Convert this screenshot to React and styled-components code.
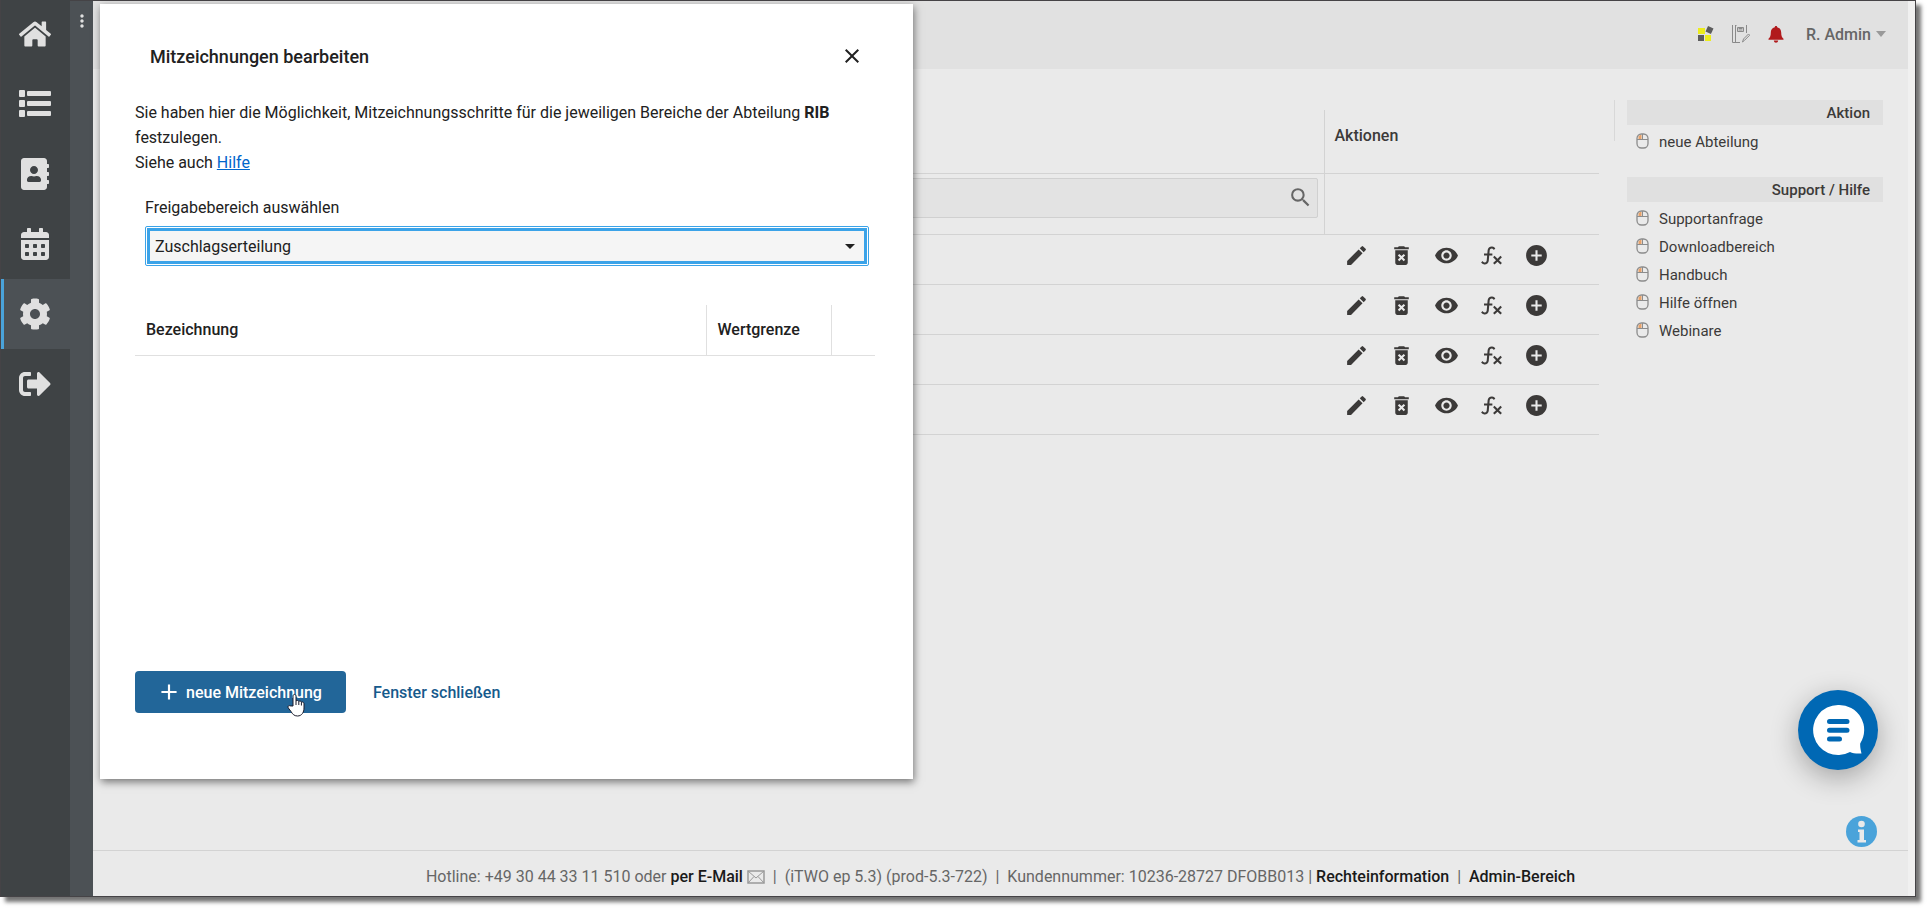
import React, { useState } from 'react';
import styled, { createGlobalStyle } from 'styled-components';
import { FaHome, FaAddressBook, FaCalendarAlt, FaCog, FaSignOutAlt } from 'react-icons/fa';
import {
  MdEdit,
  MdDeleteForever,
  MdVisibility,
  MdAddCircle,
  MdSearch,
  MdClose,
  MdAdd,
  MdMoreVert,
} from 'react-icons/md';

const GlobalStyle = createGlobalStyle`
  * {
    box-sizing: border-box;
  }
  body {
    margin: 0;
    background: #fff;
    font-family: Roboto, 'Liberation Sans', sans-serif;
    font-size: 16px;
    color: #212121;
  }
  button, select, input {
    font: inherit;
    color: inherit;
  }
`;

const Page = styled.div`
  display: flex;
  height: 100vh;
  padding: 0 15px 15px 0;
`;

const Window = styled.div`
  position: relative;
  display: flex;
  flex: 1;
  border: 1px solid #454346;
  background: #eaeaea;
  box-shadow: 5px 5px 4px 0 rgba(0, 0, 0, 0.55);
`;

const Sidebar = styled.nav`
  display: flex;
  flex-direction: column;
  width: 69px;
  margin-top: -2px;
  background: #3f4345;
`;

const SidebarLink = styled.a`
  display: flex;
  align-items: center;
  justify-content: center;
  height: 70px;
  padding-right: ${({ $active }) => ($active ? '4px' : '1px')};
  border-left: ${({ $active }) => ($active ? '3px solid #4aa3da' : '0')};
  background: ${({ $active }) => ($active ? '#4c5155' : 'transparent')};
  color: #e0e0e0;
  font-size: 32px;
`;

const Strip = styled.div`
  display: flex;
  justify-content: center;
  align-items: flex-start;
  width: 23px;
  padding-top: 10px;
  background: #4c5155;
`;

const StripButton = styled.button`
  display: flex;
  padding: 0;
  border: 0;
  background: none;
  color: #e0e0e0;
  font-size: 20px;
`;

const Main = styled.div`
  display: flex;
  flex-direction: column;
  flex: 1;
  min-width: 0;
`;

const Header = styled.header`
  display: flex;
  align-items: center;
  justify-content: flex-end;
  gap: 18px;
  height: 68px;
  padding: 0 22px 2px 0;
  background: #e1e1e1;
`;

const HeaderButton = styled.button`
  display: flex;
  padding: 0;
  border: 0;
  background: none;
`;

const UserButton = styled(HeaderButton)`
  align-items: center;
  margin-left: 4px;
  color: #666;
  font-weight: 500;
  svg {
    margin-left: 5px;
  }
`;

const Content = styled.main`
  display: flex;
  flex: 1;
  padding: 31px 25px 0 32px;
`;

const TableArea = styled.div`
  flex: 1;
  padding: 10px 15px 0 0;
`;

const DepartmentTable = styled.table`
  width: 100%;
  border-collapse: collapse;
  table-layout: fixed;
  color: #3c3a39;
`;

const HeadCell = styled.th`
  height: 63px;
  padding: 0 10px 11px;
  border-bottom: 1px solid #d3d3d3;
  border-left: ${({ $line }) => ($line ? '1px solid #d3d3d3' : '0')};
  font-weight: 500;
  text-align: left;
`;

const FilterCell = styled.td`
  height: 61px;
  padding: 4px 6px 0 0;
  border-bottom: 1px solid #d3d3d3;
  border-left: ${({ $line }) => ($line ? '1px solid #d3d3d3' : '0')};
  vertical-align: top;
`;

const SearchBox = styled.label`
  display: flex;
  align-items: center;
  height: 40px;
  padding-right: 4px;
  border: 1px solid #d0d0d0;
  border-radius: 2px;
  background: #e3e3e3;
  color: #666;
  font-size: 25px;
`;

const SearchInput = styled.input`
  flex: 1;
  min-width: 0;
  border: 0;
  outline: 0;
  background: none;
  font-size: 16px;
`;

const BodyCell = styled.td`
  height: 50px;
  padding: 0 0 8px 20px;
  border-bottom: 1px solid #d3d3d3;
`;

const Actions = styled.div`
  display: flex;
  gap: 20px;
`;

const ActionButton = styled.button`
  display: flex;
  padding: 0;
  border: 0;
  background: none;
  font-size: 25px;
`;

const Aside = styled.aside`
  display: flex;
  align-items: flex-start;
  width: 269px;
`;

const AsideLine = styled.div`
  width: 1px;
  height: 41px;
  margin-right: 12px;
  background: #d8d8d8;
`;

const AsideGroups = styled.div`
  display: flex;
  flex: 1;
  flex-direction: column;
  gap: 21px;
`;

const GroupTitle = styled.h2`
  height: 25px;
  margin: 0 0 3px;
  padding-right: 13px;
  background: #e0e0e0;
  color: #3c3a39;
  font-size: 15px;
  font-weight: 500;
  line-height: 26px;
  text-align: right;
`;

const GroupLink = styled.a`
  display: flex;
  height: 28px;
  padding-left: 9px;
  color: #3c3a39;
  font-size: 15px;
  line-height: 28px;
  text-decoration: none;
  svg {
    margin: 5px 10px 0 0;
  }
`;

const Footer = styled.footer`
  display: flex;
  align-items: center;
  justify-content: center;
  height: 46px;
  padding-top: 6px;
  border-top: 1px solid #d3d3d3;
  color: #666;
  white-space: pre;
`;

const FooterLink = styled.a`
  color: #1a1a1a;
  font-weight: 500;
  text-decoration: none;
`;

const MailIcon = styled.svg`
  margin-left: 4px;
`;

const ScrollTrack = styled.div`
  width: 7px;
  background: #f0f0f0;
`;

const Dialog = styled.section`
  position: absolute;
  top: 3px;
  left: 99px;
  display: flex;
  flex-direction: column;
  width: 813px;
  height: 775px;
  padding: 34px 38px 66px 35px;
  background: #fff;
  box-shadow: 1px 3px 8px rgba(0, 0, 0, 0.5);
`;

const DialogHeader = styled.div`
  display: flex;
  align-items: center;
  justify-content: space-between;
  height: 36px;
  padding: 0 11px 0 15px;
`;

const DialogTitle = styled.h1`
  margin: 0;
  font-size: 18px;
  font-weight: 500;
`;

const CloseButton = styled.button`
  display: flex;
  padding: 0;
  border: 0;
  background: none;
  font-size: 24px;
`;

const Intro = styled.p`
  margin: 26px 0 20px;
  line-height: 25px;
`;

const HelpLink = styled.a`
  color: #0066cc;
`;

const Field = styled.div`
  display: flex;
  flex-direction: column;
  margin: 0 6px 0 10px;
`;

const FieldLabel = styled.label`
  margin-bottom: 6px;
  line-height: 25px;
`;

const SelectWrap = styled.div`
  display: grid;
  align-items: center;
  border: 1px solid #3ba3e8;
  border-radius: 2px;
  padding: 1px;
  > * {
    grid-area: 1 / 1;
  }
  svg {
    justify-self: end;
    margin-right: 12px;
    pointer-events: none;
  }
`;

const Select = styled.select`
  width: 100%;
  height: 36px;
  padding: 0 5px;
  border: 3px solid #3ba3e8;
  outline: 0;
  appearance: none;
  background: #f5f5f5;
`;

const SignTable = styled.table`
  margin-top: 39px;
  border-collapse: collapse;
  table-layout: fixed;
`;

const SignHead = styled.th`
  width: ${({ $width }) => $width || 'auto'};
  height: 50px;
  padding: 0 11px;
  border-bottom: 1px solid #e0e0e0;
  border-left: ${({ $line }) => ($line ? '1px solid #e0e0e0' : '0')};
  font-weight: 500;
  text-align: left;
`;

const DialogFooter = styled.div`
  display: flex;
  align-items: center;
  gap: 27px;
  margin-top: auto;
`;

const PrimaryButton = styled.button`
  position: relative;
  display: flex;
  align-items: center;
  gap: 4px;
  height: 42px;
  padding: 0 24px 0 21px;
  border: 0;
  border-radius: 4px;
  background: #226699;
  color: #fff;
  font-weight: 500;
`;

const TextButton = styled.button`
  padding: 0;
  border: 0;
  background: none;
  color: #165a8c;
  font-weight: 500;
`;

const Cursor = styled.svg`
  position: absolute;
  top: 22px;
  left: 152px;
`;

const ChatButton = styled.button`
  position: absolute;
  right: 37px;
  bottom: 126px;
  display: flex;
  padding: 0;
  border: 0;
  border-radius: 50%;
  background: #0068b4;
  box-shadow: 0 8px 28px rgba(0, 0, 0, 0.3);
`;

const InfoButton = styled.button`
  position: absolute;
  right: 38px;
  bottom: 49px;
  display: flex;
  padding: 0;
  border: 0;
  background: none;
`;

function ListIcon() {
  return (
    <svg width="32" height="28" viewBox="0 0 32 28" fill="currentColor">
      <rect y="0" width="6" height="7" rx="1" />
      <rect y="10" width="6" height="7" rx="1" />
      <rect y="20" width="6" height="7" rx="1" />
      <rect x="8" y="1" width="24" height="5" rx="1" />
      <rect x="8" y="11" width="24" height="5" rx="1" />
      <rect x="8" y="21" width="24" height="5" rx="1" />
    </svg>
  );
}

const sidebarItems = [
  { label: 'Startseite', Icon: FaHome },
  { label: 'Liste', Icon: ListIcon },
  { label: 'Adressbuch', Icon: FaAddressBook },
  { label: 'Kalender', Icon: FaCalendarAlt },
  { label: 'Einstellungen', Icon: FaCog, active: true },
  { label: 'Abmelden', Icon: FaSignOutAlt },
];

const asideGroups = [
  { title: 'Aktion', links: ['neue Abteilung'] },
  {
    title: 'Support / Hilfe',
    links: ['Supportanfrage', 'Downloadbereich', 'Handbuch', 'Hilfe öffnen', 'Webinare'],
  },
];

const rows = [1, 2, 3, 4];

function FunctionIcon() {
  return (
    <svg width="25" height="25" viewBox="0 0 24 24" fill="currentColor">
      <path d="M12.42 5.29c-1.1-.1-2.07.71-2.17 1.82L10 10h2.82v2h-3l-.44 5.07c-.2 2.2-2.14 3.83-4.34 3.63A3.98 3.98 0 0 1 2 18.83l1.5-1.5c.33 1.05 1.46 1.64 2.5 1.3.78-.24 1.33-.93 1.4-1.74L7.82 12h-3v-2H8l.27-3.07c.19-2.2 2.12-3.83 4.33-3.65 1.26.11 2.4.81 3.06 1.89l-1.5 1.5c-.25-.77-.93-1.31-1.74-1.38M22 13.65l-1.41-1.41-2.83 2.83-2.83-2.83-1.43 1.41 2.85 2.85-2.85 2.81 1.43 1.41 2.83-2.83 2.83 2.83L22 19.31l-2.83-2.81z" />
    </svg>
  );
}

const rowActions = [
  { label: 'Bearbeiten', Icon: MdEdit },
  { label: 'Löschen', Icon: MdDeleteForever },
  { label: 'Anzeigen', Icon: MdVisibility },
  { label: 'Funktion', Icon: FunctionIcon },
  { label: 'Hinzufügen', Icon: MdAddCircle },
];

function MouseIcon() {
  return (
    <svg width="13" height="16" viewBox="0 0 13 16" fill="none">
      <path d="M2.500 3.500 4 2h1.500v4h-3z" fill="#e8a169" />
      <rect x="1" y="1" width="11" height="14" rx="4.5" stroke="#8c8c8c" strokeWidth="1.3" />
      <path d="M1 6.500h11M6.500 1v5.500" stroke="#8c8c8c" />
    </svg>
  );
}

function ModulesIcon() {
  return (
    <svg width="16" height="16" viewBox="0 0 16 16">
      <rect x="0" y="2" width="7" height="6" fill="#ecec1c" />
      <rect x="0" y="9" width="6" height="6" fill="#5c5c5c" />
      <rect x="7" y="9" width="6" height="6" fill="#ecec1c" />
      <rect x="8.5" y="1" width="6" height="6" fill="#5c5c5c" transform="rotate(25 11.5 4)" />
    </svg>
  );
}

function NotesIcon() {
  return (
    <svg width="18" height="18" viewBox="0 0 18 18" fill="none" stroke="#8a8a8a">
      <path d="M.5 0v17.5H8M3.5 0v17M3.5.5h1M14.5 0v8" />
      <path d="M5.5 2.5h6v4h-6zM6.5 3.5h4M6.5 5h4" />
      <path d="m10.5 17 1-3 5-5 1.2 1.2-5 5z" />
    </svg>
  );
}

function BellIcon() {
  return (
    <svg width="16" height="17" viewBox="0 0 16 17" fill="#b11a1c">
      <path d="M8 0c.8 0 1.2.5 1.2 1.2C12 2 13.2 4 13.2 6.5c0 3.500.8 5 2.300 6.300v1H.5v-1C2 11.500 2.800 10 2.800 6.500 2.800 4 4 2 6.800 1.200 6.800.5 7.200 0 8 0z" />
      <path d="M5.800 14.600h4.400c-.2 1.500-1.100 2.200-2.200 2.200s-2-.7-2.200-2.200z" />
    </svg>
  );
}

function App() {
  const [area, setArea] = useState('Zuschlagserteilung');
  return (
    <Page>
      <GlobalStyle />
      <Window>
        <Sidebar>
          {sidebarItems.map(({ label, Icon, active }) => (
            <SidebarLink key={label} href="#" aria-label={label} $active={active}>
              <Icon />
            </SidebarLink>
          ))}
        </Sidebar>
        <Strip>
          <StripButton aria-label="Menü">
            <MdMoreVert />
          </StripButton>
        </Strip>
        <Main>
          <Header>
            <HeaderButton aria-label="Module">
              <ModulesIcon />
            </HeaderButton>
            <HeaderButton aria-label="Notizen">
              <NotesIcon />
            </HeaderButton>
            <HeaderButton aria-label="Benachrichtigungen">
              <BellIcon />
            </HeaderButton>
            <UserButton>
              R. Admin
              <svg width="10" height="6" viewBox="0 0 10 6" fill="#999">
                <path d="M0 0h10L5 6z" />
              </svg>
            </UserButton>
          </Header>
          <Content>
            <TableArea>
              <DepartmentTable>
                <colgroup>
                  <col />
                  <col width="275" />
                </colgroup>
                <thead>
                  <tr>
                    <HeadCell aria-label="Abteilung" />
                    <HeadCell $line>Aktionen</HeadCell>
                  </tr>
                </thead>
                <tbody>
                  <tr>
                    <FilterCell>
                      <SearchBox>
                        <SearchInput aria-label="Suche" />
                        <MdSearch />
                      </SearchBox>
                    </FilterCell>
                    <FilterCell $line />
                  </tr>
                  {rows.map((row) => (
                    <tr key={row}>
                      <BodyCell />
                      <BodyCell>
                        <Actions>
                          {rowActions.map(({ label, Icon }) => (
                            <ActionButton key={label} aria-label={label}>
                              <Icon />
                            </ActionButton>
                          ))}
                        </Actions>
                      </BodyCell>
                    </tr>
                  ))}
                </tbody>
              </DepartmentTable>
            </TableArea>
            <Aside>
              <AsideLine />
              <AsideGroups>
                {asideGroups.map(({ title, links }) => (
                  <div key={title}>
                    <GroupTitle>{title}</GroupTitle>
                    {links.map((link) => (
                      <GroupLink key={link} href="#">
                        <MouseIcon />
                        {link}
                      </GroupLink>
                    ))}
                  </div>
                ))}
              </AsideGroups>
            </Aside>
          </Content>
          <Footer>
            {'Hotline: +49 30 44 33 11 510 oder '}
            <FooterLink href="#">per E-Mail</FooterLink>
            <MailIcon width="18" height="14" viewBox="0 0 18 14" fill="none" stroke="#999">
              <rect x="1" y="1" width="16" height="12" strokeWidth="1.5" />
              <path d="m1 1 8 7 8-7M1 13l6-6.500M17 13l-6-6.500" />
            </MailIcon>
            {'  |  (iTWO ep 5.3) (prod-5.3-722)  |  Kundennummer: 10236-28727 DFOBB013 | '}
            <FooterLink href="#">Rechteinformation</FooterLink>
            {'  |  '}
            <FooterLink href="#">Admin-Bereich</FooterLink>
          </Footer>
        </Main>
        <ScrollTrack />

        <Dialog role="dialog" aria-labelledby="dialog-title">
          <DialogHeader>
            <DialogTitle id="dialog-title">Mitzeichnungen bearbeiten</DialogTitle>
            <CloseButton aria-label="Schließen">
              <MdClose />
            </CloseButton>
          </DialogHeader>
          <Intro>
            Sie haben hier die Möglichkeit, Mitzeichnungsschritte für die jeweiligen Bereiche der
            Abteilung <strong>RIB</strong> festzulegen.
            <br />
            Siehe auch <HelpLink href="#">Hilfe</HelpLink>
          </Intro>
          <Field>
            <FieldLabel htmlFor="area">Freigabebereich auswählen</FieldLabel>
            <SelectWrap>
              <Select id="area" value={area} onChange={(e) => setArea(e.target.value)}>
                <option>Zuschlagserteilung</option>
              </Select>
              <svg width="10" height="5" viewBox="0 0 10 5" fill="#212121">
                <path d="M0 0h10L5 5z" />
              </svg>
            </SelectWrap>
          </Field>
          <SignTable>
            <thead>
              <tr>
                <SignHead>Bezeichnung</SignHead>
                <SignHead $line $width="125px">Wertgrenze</SignHead>
                <SignHead $line $width="44px" aria-label="Aktionen" />
              </tr>
            </thead>
          </SignTable>
          <DialogFooter>
            <PrimaryButton>
              <MdAdd size={26} />
              neue Mitzeichnung
              <Cursor width="18" height="24" viewBox="0 0 18 24">
                <path
                  d="M6 13V3.200C6 .8 9 .8 9 3.200V8c.8-1 2.500-.7 2.800.5.900-.8 2.300-.4 2.600.7 1.200-.6 2.600.1 2.600 1.600V15c0 4-2 8-6.500 8-3.500 0-5-2-6.500-4.500L1.200 14.800c-.8-1.500.7-2.800 2-1.900z"
                  fill="#fff"
                  stroke="#1a1a2a"
                />
                <path d="M9 8v4M11.800 8.500V12M14.400 9.200v3.300" stroke="#1a1a2a" />
              </Cursor>
            </PrimaryButton>
            <TextButton>Fenster schließen</TextButton>
          </DialogFooter>
        </Dialog>

        <ChatButton aria-label="Chat">
          <svg width="80" height="80" viewBox="0 0 80 80">
            <path d="M40 15a25 25 0 1 0 12 47c3 1.500 7 1.800 11.500 1.500-.8-3.500-1.500-6.500-1.300-10A25 25 0 0 0 40 15z" fill="#fff" />
            <path d="M31.500 31.500h17.500M31.500 40.200h17.500M31.500 49h10" stroke="#0068b4" strokeWidth="5" strokeLinecap="round" />
          </svg>
        </ChatButton>
        <InfoButton aria-label="Information">
          <svg width="31" height="31" viewBox="0 0 31 31">
            <circle cx="15.500" cy="15.500" r="15.500" fill="#4aa3da" />
            <circle cx="15.500" cy="8" r="3.300" fill="#eaeaea" />
            <path d="M12 13.500h6V24h2v2.500h-8.500V24h2v-8H12z" fill="#eaeaea" />
          </svg>
        </InfoButton>
      </Window>
    </Page>
  );
}

export default App;
